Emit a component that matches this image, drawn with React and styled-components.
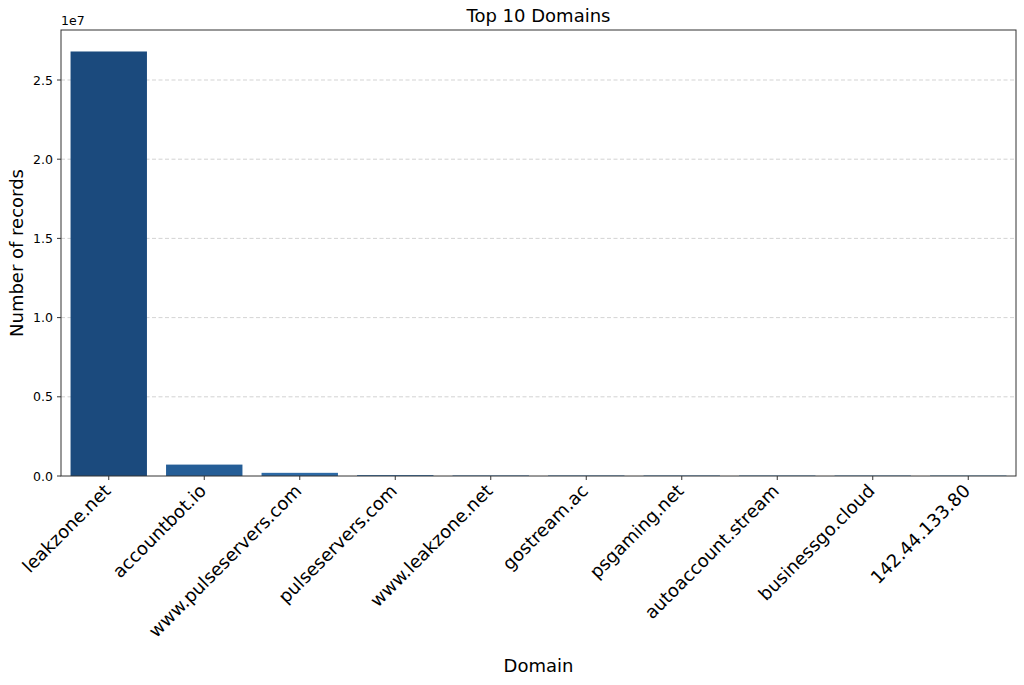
import React from "react";
import styled, { createGlobalStyle } from "styled-components";

const Global = createGlobalStyle`
  html, body { margin: 0; padding: 0; background: #fff; }
`;

const Figure = styled.div`
  width: 1024px;
  height: 685px;
  background: #ffffff;
  font-family: "DejaVu Sans", sans-serif;
  svg { display: block; }
  text { font-family: "DejaVu Sans", sans-serif; fill: #000; }
`;

const L = 61, R = 1016, T = 30, B = 476;
const PER = 158.4; // px per 1e7
const step = (R - L) / 10;

const data = [
  ["leakzone.net", 26.8e6, "#1b4a7d"],
  ["accountbot.io", 0.72e6, "#255e97"],
  ["www.pulseservers.com", 0.2e6, "#2d6aa6"],
  ["pulseservers.com", 0.06e6, "#3673ad"],
  ["www.leakzone.net", 0.01e6, "#3f7bb3"],
  ["gostream.ac", 0.005e6, "#4682b8"],
  ["psgaming.net", 0.004e6, "#4e89bc"],
  ["autoaccount.stream", 0.003e6, "#5690c0"],
  ["businessgo.cloud", 0.002e6, "#5e97c4"],
  ["142.44.133.80", 0.002e6, "#669ec8"],
];

const yTicks = [0, 0.5, 1.0, 1.5, 2.0, 2.5];

export default function App() {
  return (
    <Figure>
      <Global />
      <svg width="1024" height="685">
        <text x={(L + R) / 2} y={22} fontSize="18" textAnchor="middle">Top 10 Domains</text>
        {yTicks.map((v) => {
          const y = B - v * PER;
          return (
            <g key={v}>
              {v > 0 && <line x1={L} x2={R} y1={y} y2={y} stroke="#c8c8c8" strokeWidth="0.8" strokeDasharray="4 2.5" />}
              <line x1={L - 4} x2={L} y1={y} y2={y} stroke="#000" strokeWidth="0.8" />
              <text x={L - 8} y={y + 4.5} fontSize="12.5" textAnchor="end">{v.toFixed(1)}</text>
            </g>
          );
        })}
        <text x={L} y={25} fontSize="12.5">1e7</text>
        {data.map(([name, val, color], i) => {
          const cx = L + step * (i + 0.5);
          const w = step * 0.8;
          const h = Math.max((val / 1e7) * PER, 0.6);
          return (
            <g key={name}>
              <rect x={cx - w / 2} y={B - h} width={w} height={h} fill={color} />
              <line x1={cx} x2={cx} y1={B} y2={B + 4} stroke="#000" strokeWidth="0.8" />
              <text
                fontSize="18"
                textAnchor="end"
                transform={`translate(${cx + 3} ${B + 16}) rotate(-45)`}
              >
                {name}
              </text>
            </g>
          );
        })}
        <rect x={L} y={T} width={R - L} height={B - T} fill="none" stroke="#333" strokeWidth="1" />
        <text fontSize="18" textAnchor="middle" transform={`translate(23 ${(T + B) / 2}) rotate(-90)`}>Number of records</text>
        <text x={(L + R) / 2} y={672} fontSize="18" textAnchor="middle">Domain</text>
      </svg>
    </Figure>
  );
}
